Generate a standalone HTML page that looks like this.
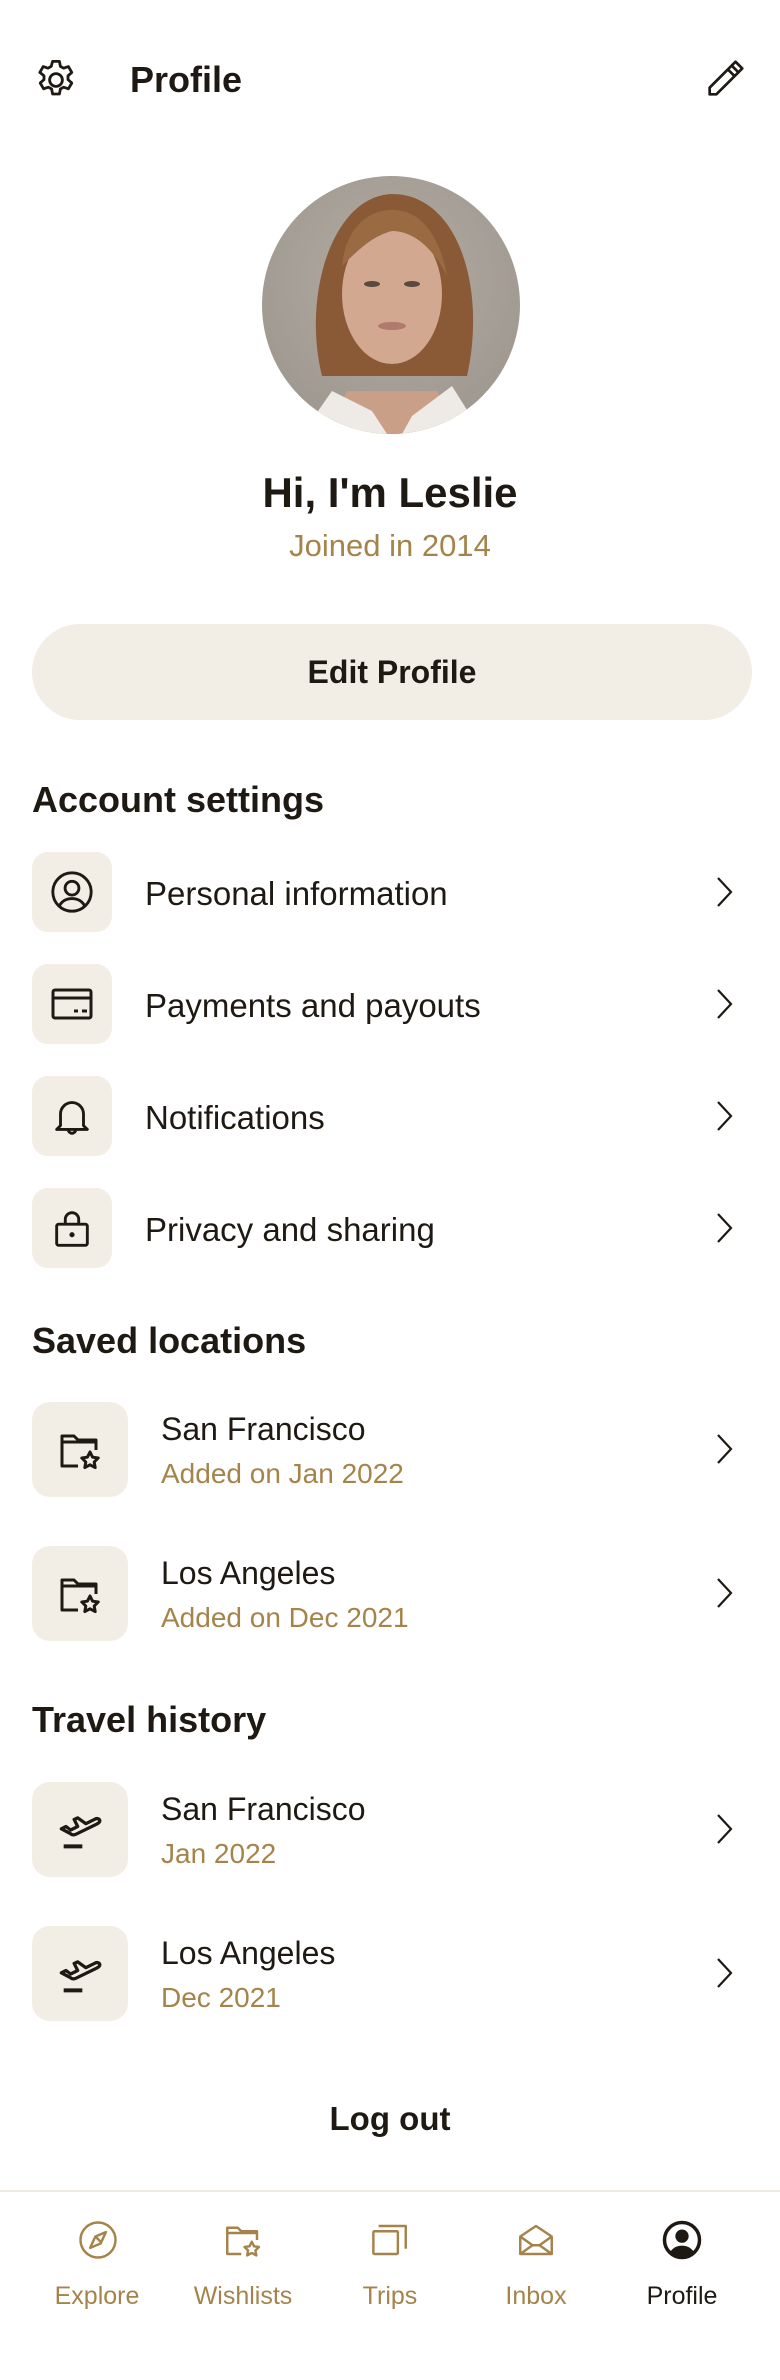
<!DOCTYPE html>
<html><head><meta charset="utf-8">
<style>
*{margin:0;padding:0;box-sizing:border-box}
body{width:780px;height:2380px;background:#fff;position:relative;overflow:hidden;font-family:"Liberation Sans",sans-serif;color:#1e1912}
.a{position:absolute;line-height:1;white-space:nowrap}
.b{font-weight:bold}
.g{color:#a4844a}
.box{position:absolute;left:32px;background:#f2eee6;border-radius:16px;display:flex;align-items:center;justify-content:center}
.s{width:80px;height:80px}
.l{width:96px;height:95px;border-radius:18px}
.chev{position:absolute;left:712px}
.nl{position:absolute;top:2284px;width:140px;text-align:center;font-size:25px;line-height:1}
.ni{position:absolute;top:2219px}
</style></head><body>

<!-- header -->
<svg class="a" style="left:32px;top:56px" width="48" height="48" viewBox="0 0 24 24" fill="none" stroke="#1e1912" stroke-width="1.4" stroke-linejoin="round"><path d="M10.3 2.7h3.4l.5 2.5 1.6.9 2.4-.8 1.7 2.9-1.9 1.7v1.9l1.9 1.7-1.7 2.9-2.4-.8-1.6.9-.5 2.5h-3.4l-.5-2.5-1.6-.9-2.4.8-1.7-2.9 1.9-1.7v-1.9L3.9 8.2l1.7-2.9 2.4.8 1.6-.9z"/><circle cx="12" cy="12" r="3.2"/></svg>
<div class="a b" style="left:130px;top:62px;font-size:36px">Profile</div>
<svg class="a" style="left:702px;top:56px" width="46" height="46" viewBox="0 0 24 24" fill="none" stroke="#1e1912" stroke-width="1.4" stroke-linejoin="round"><path d="M4 20v-3.5L15.5 5l3.5 3.5L7.5 20z"/><path d="M13.5 7l3.5 3.5"/><path d="M15.5 5l2-2 3.5 3.5-2 2"/></svg>

<!-- avatar -->
<svg class="a" style="left:262px;top:176px" width="258" height="258" viewBox="0 0 258 258">
<defs><clipPath id="c"><circle cx="129" cy="129" r="129"/></clipPath>
<radialGradient id="bg" cx="0.5" cy="0.4" r="0.7"><stop offset="0" stop-color="#b3aca3"/><stop offset="1" stop-color="#9c958d"/></radialGradient></defs>
<g clip-path="url(#c)">
<rect width="258" height="258" fill="url(#bg)"/>
<path d="M60 200 C40 120 70 20 130 18 C195 18 225 110 205 200 Z" fill="#8a5a36"/>
<path d="M85 215 L175 215 L200 258 L60 258 Z" fill="#c99f87"/>
<ellipse cx="130" cy="118" rx="50" ry="70" fill="#d2a891"/>
<path d="M80 90 C85 40 120 30 140 35 C165 40 180 70 185 100 C170 70 150 55 130 55 C110 60 95 75 80 90Z" fill="#9a6a42"/>
<path d="M40 258 L70 215 L110 235 L125 258Z" fill="#eeeae5"/>
<path d="M220 258 L190 210 L150 240 L140 258Z" fill="#eeeae5"/>
<ellipse cx="110" cy="108" rx="8" ry="3" fill="#5a4a40"/><ellipse cx="150" cy="108" rx="8" ry="3" fill="#5a4a40"/>
<ellipse cx="130" cy="150" rx="14" ry="4" fill="#b07a6c"/>
</g></svg>

<div class="a b" style="left:0;width:780px;text-align:center;top:472px;font-size:42px">Hi, I'm Leslie</div>
<div class="a g" style="left:0;width:780px;text-align:center;top:530px;font-size:31px">Joined in 2014</div>

<div class="a b" style="left:32px;top:624px;width:720px;height:96px;border-radius:48px;background:#f2eee6;line-height:96px;text-align:center;font-size:32px">Edit Profile</div>

<div class="a b" style="left:32px;top:782px;font-size:36px">Account settings</div>

<div class="box s" style="top:852px"><svg width="46" height="46" viewBox="0 0 24 24" fill="none" stroke="#1e1912" stroke-width="1.5"><circle cx="12" cy="12" r="10"/><circle cx="12" cy="10" r="3.6"/><path d="M5.5 19c1.5-2.5 3.8-3.6 6.5-3.6s5 1.1 6.5 3.6"/></svg></div>
<div class="a" style="left:145px;top:877px;font-size:33px">Personal information</div>
<div class="box s" style="top:964px"><svg width="48" height="48" viewBox="0 0 24 24" fill="none" stroke="#1e1912" stroke-width="1.5"><rect x="2.5" y="5" width="19" height="14" rx="1"/><path d="M2.5 9h19M13 15.5h2M17 15.5h2.5"/></svg></div>
<div class="a" style="left:145px;top:989px;font-size:33px">Payments and payouts</div>
<div class="box s" style="top:1076px"><svg width="46" height="46" viewBox="0 0 24 24" fill="none" stroke="#1e1912" stroke-width="1.5" stroke-linejoin="round"><path d="M6 17V11a6 6 0 0 1 12 0v6l2 2H4z"/><path d="M10 19a2 2 0 0 0 4 0"/></svg></div>
<div class="a" style="left:145px;top:1101px;font-size:33px">Notifications</div>
<div class="box s" style="top:1188px"><svg width="46" height="46" viewBox="0 0 24 24" fill="none" stroke="#1e1912" stroke-width="1.5"><rect x="4" y="10" width="16" height="11" rx="1"/><path d="M8.5 10V7.5a3.5 3.5 0 0 1 7 0V10"/><circle cx="12" cy="15.5" r="0.6" fill="#1e1912"/></svg></div>
<div class="a" style="left:145px;top:1213px;font-size:33px">Privacy and sharing</div>

<div class="a b" style="left:32px;top:1323px;font-size:36px">Saved locations</div>

<div class="box l" style="top:1402px"><svg width="48" height="48" viewBox="0 0 24 24" fill="none" stroke="#1e1912" stroke-width="1.5" stroke-linejoin="round"><path d="M11 20H3V5h6l2 2h9v5"/><path d="M3 8h17"/><path d="M17 13l1.3 2.6 2.8.4-2 2 .5 2.8-2.6-1.4-2.6 1.4.5-2.8-2-2 2.8-.4z"/></svg></div>
<div class="a" style="left:161px;top:1413px;font-size:32px">San Francisco</div>
<div class="a g" style="left:161px;top:1460px;font-size:28px">Added on Jan 2022</div>
<div class="box l" style="top:1546px"><svg width="48" height="48" viewBox="0 0 24 24" fill="none" stroke="#1e1912" stroke-width="1.5" stroke-linejoin="round"><path d="M11 20H3V5h6l2 2h9v5"/><path d="M3 8h17"/><path d="M17 13l1.3 2.6 2.8.4-2 2 .5 2.8-2.6-1.4-2.6 1.4.5-2.8-2-2 2.8-.4z"/></svg></div>
<div class="a" style="left:161px;top:1557px;font-size:32px">Los Angeles</div>
<div class="a g" style="left:161px;top:1604px;font-size:28px">Added on Dec 2021</div>

<div class="a b" style="left:32px;top:1702px;font-size:36px">Travel history</div>

<div class="box l" style="top:1782px"><svg width="56" height="56" viewBox="0 0 24 24" fill="none" stroke="#1e1912" stroke-width="1.4" stroke-linejoin="round"><path d="M4 11.5l2-1 2 1.5 3-1.5-1.5-3 1.5-.7 3.5 2.5 4-2c1-.5 2 0 2 .8-.1.6-.6 1-1.2 1.3l-9 4.4c-.8.4-1.8.3-2.5-.3z"/><path d="M5 19h8" stroke-width="1.7"/></svg></div>
<div class="a" style="left:161px;top:1793px;font-size:32px">San Francisco</div>
<div class="a g" style="left:161px;top:1840px;font-size:28px">Jan 2022</div>
<div class="box l" style="top:1926px"><svg width="56" height="56" viewBox="0 0 24 24" fill="none" stroke="#1e1912" stroke-width="1.4" stroke-linejoin="round"><path d="M4 11.5l2-1 2 1.5 3-1.5-1.5-3 1.5-.7 3.5 2.5 4-2c1-.5 2 0 2 .8-.1.6-.6 1-1.2 1.3l-9 4.4c-.8.4-1.8.3-2.5-.3z"/><path d="M5 19h8" stroke-width="1.7"/></svg></div>
<div class="a" style="left:161px;top:1937px;font-size:32px">Los Angeles</div>
<div class="a g" style="left:161px;top:1984px;font-size:28px">Dec 2021</div>

<!-- chevrons -->
<svg class="chev" style="top:875px" width="24" height="34" viewBox="0 0 24 34" fill="none" stroke="#1e1912" stroke-width="2.2"><path d="M6 3l13 14L6 31"/></svg>
<svg class="chev" style="top:987px" width="24" height="34" viewBox="0 0 24 34" fill="none" stroke="#1e1912" stroke-width="2.2"><path d="M6 3l13 14L6 31"/></svg>
<svg class="chev" style="top:1099px" width="24" height="34" viewBox="0 0 24 34" fill="none" stroke="#1e1912" stroke-width="2.2"><path d="M6 3l13 14L6 31"/></svg>
<svg class="chev" style="top:1211px" width="24" height="34" viewBox="0 0 24 34" fill="none" stroke="#1e1912" stroke-width="2.2"><path d="M6 3l13 14L6 31"/></svg>
<svg class="chev" style="top:1432px" width="24" height="34" viewBox="0 0 24 34" fill="none" stroke="#1e1912" stroke-width="2.2"><path d="M6 3l13 14L6 31"/></svg>
<svg class="chev" style="top:1576px" width="24" height="34" viewBox="0 0 24 34" fill="none" stroke="#1e1912" stroke-width="2.2"><path d="M6 3l13 14L6 31"/></svg>
<svg class="chev" style="top:1812px" width="24" height="34" viewBox="0 0 24 34" fill="none" stroke="#1e1912" stroke-width="2.2"><path d="M6 3l13 14L6 31"/></svg>
<svg class="chev" style="top:1956px" width="24" height="34" viewBox="0 0 24 34" fill="none" stroke="#1e1912" stroke-width="2.2"><path d="M6 3l13 14L6 31"/></svg>

<div class="a b" style="left:0;width:780px;text-align:center;top:2102px;font-size:33px">Log out</div>

<!-- bottom nav -->
<div class="a" style="left:0;top:2190px;width:780px;height:2px;background:#f0ece4"></div>
<svg class="ni" style="left:77px" width="42" height="42" viewBox="0 0 24 24" fill="none" stroke="#a4844a" stroke-width="1.4" stroke-linejoin="round"><circle cx="12" cy="12" r="10"/><path d="M16.5 7.5l-6 2.5-3 6.5 6-2.5z"/><path d="M10.5 10l3.5 3.5"/></svg>
<svg class="ni" style="left:222px" width="42" height="42" viewBox="0 0 24 24" fill="none" stroke="#a4844a" stroke-width="1.4" stroke-linejoin="round"><path d="M11 20H3V5h6l2 2h9v5"/><path d="M3 8h17"/><path d="M17 13l1.3 2.6 2.8.4-2 2 .5 2.8-2.6-1.4-2.6 1.4.5-2.8-2-2 2.8-.4z"/></svg>
<svg class="ni" style="left:369px" width="42" height="42" viewBox="0 0 24 24" fill="none" stroke="#a4844a" stroke-width="1.4" stroke-linejoin="round"><rect x="2.5" y="7" width="14" height="13" rx="0.6"/><path d="M5.5 4h15.5v13"/></svg>
<svg class="ni" style="left:515px" width="42" height="42" viewBox="0 0 24 24" fill="none" stroke="#a4844a" stroke-width="1.4" stroke-linejoin="round"><path d="M3 10l9-6 9 6v10H3z"/><path d="M3 10l7 5h4l7-5M3 20l7-5M21 20l-7-5"/></svg>
<svg class="ni" style="left:661px" width="42" height="42" viewBox="0 0 24 24"><circle cx="12" cy="12" r="10" fill="none" stroke="#1e1912" stroke-width="2"/><circle cx="12" cy="9.8" r="3.8" fill="#1e1912"/><path d="M5.2 18.8c1.8-2.5 4-3.6 6.8-3.6s5 1.1 6.8 3.6A9.8 9.8 0 0 1 12 22a9.8 9.8 0 0 1-6.8-3.2z" fill="#1e1912"/></svg>
<div class="nl g" style="left:27px">Explore</div>
<div class="nl g" style="left:173px">Wishlists</div>
<div class="nl g" style="left:320px">Trips</div>
<div class="nl g" style="left:466px">Inbox</div>
<div class="nl" style="left:612px">Profile</div>
</body></html>
